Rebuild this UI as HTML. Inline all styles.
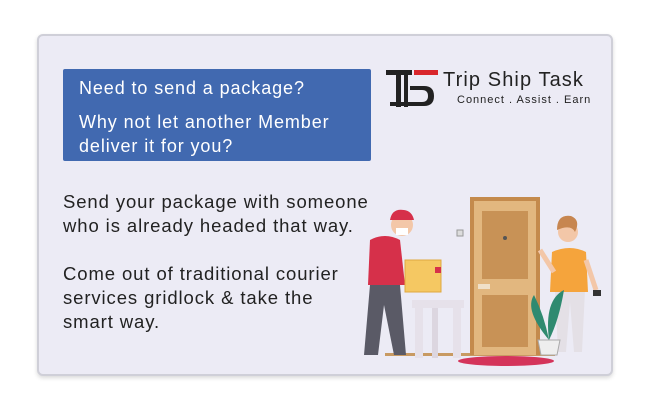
<!DOCTYPE html>
<html><head><style>
body{margin:0;width:649px;height:415px;background:#fff;font-family:"Liberation Sans",sans-serif;position:relative;overflow:hidden}
.card{position:absolute;left:37px;top:34px;width:572px;height:338px;background:#ecebf5;border:2px solid #cfcfd8;border-radius:6px;box-shadow:0 2px 4px rgba(0,0,0,.15)}
.blue{position:absolute;left:63px;top:69px;width:308px;height:92px;background:#4169b0;border-radius:2px;color:#fff;font-size:18px;letter-spacing:0.9px}
.blue div{position:absolute;left:16px;white-space:nowrap}
.t{position:absolute;left:63px;color:#222;font-size:18.5px;letter-spacing:0.9px;line-height:24px;white-space:nowrap}
</style></head><body>
<div class="card"></div>
<div class="blue">
<div style="top:9px">Need to send a package?</div>
<div style="top:41px;line-height:24px">Why not let another Member<br>deliver it for you?</div>
</div>
<div class="t" style="top:190px">Send your package with someone<br>who is already headed that way.</div>
<div class="t" style="top:262px">Come out of traditional courier<br>services gridlock &amp; take the<br>smart way.</div>
<svg style="position:absolute;left:384px;top:68px" width="60" height="44">
<rect x="2" y="2" width="26" height="5" fill="#222"/><rect x="30" y="2" width="24" height="5" fill="#d9262c"/>
<rect x="12" y="7" width="5" height="32" fill="#222"/><rect x="20" y="7" width="4" height="32" fill="#222"/>
<path d="M8 14h10M26 18h14q10 0 10 10t-10 10H6v-4h32q6 0 6-6t-6-6H26z" fill="#222"/>
</svg>
<div style="position:absolute;left:443px;top:69px;font-size:20px;letter-spacing:1.1px;color:#222;white-space:nowrap">Trip Ship Task</div>
<div style="position:absolute;left:457px;top:94px;font-size:11px;letter-spacing:1px;color:#222;white-space:nowrap">Connect . Assist . Earn</div>
<svg style="position:absolute;left:350px;top:190px" width="270" height="180">
<rect x="35" y="163" width="170" height="3" fill="#c89a62"/>
<rect x="120" y="7" width="70" height="158" fill="#c48a4c"/>
<rect x="124" y="11" width="62" height="154" fill="#e2b77f"/>
<rect x="132" y="21" width="46" height="68" fill="#c89256"/>
<rect x="132" y="105" width="46" height="52" fill="#c89256"/>
<circle cx="155" cy="48" r="2" fill="#555"/>
<rect x="128" y="94" width="12" height="5" fill="#f0e0c8"/>
<rect x="107" y="40" width="6" height="6" fill="#ddd" stroke="#999"/>
<ellipse cx="156" cy="171" rx="48" ry="5" fill="#d4345a"/>
<rect x="62" y="110" width="52" height="8" fill="#e6e1ea"/>
<rect x="65" y="118" width="8" height="50" fill="#e6e1ea"/><rect x="103" y="118" width="8" height="50" fill="#e6e1ea"/><rect x="82" y="118" width="6" height="50" fill="#dcd6e0"/>
<path d="M20 95h30l6 70h-12l-10-50-6 50H14z" fill="#5a5a66"/>
<path d="M20 50q15-8 30 0l5 45H18z" fill="#d6304a"/>
<circle cx="52" cy="35" r="11" fill="#f3c7a8"/>
<path d="M40 30q2-12 14-10q8 1 10 10z" fill="#d6304a"/>
<rect x="46" y="38" width="12" height="7" fill="#fff"/>
<rect x="55" y="70" width="36" height="32" fill="#f5c862" stroke="#e0a840"/>
<rect x="85" y="77" width="6" height="6" fill="#d6304a"/>
<path d="M205 100h30l-3 62h-8l-4-50-4 50h-8z" fill="#e4e0e6"/>
<path d="M202 62q18-8 34 0l2 40h-38z" fill="#f5a43c"/>
<circle cx="218" cy="42" r="10" fill="#f3c7a8"/>
<path d="M207 40q0-16 14-14q10 4 4 16q-4-8-18-2z" fill="#c78650"/>
<path d="M190 60l14 22" stroke="#f3c7a8" stroke-width="5"/>
<path d="M236 70l10 30" stroke="#f3c7a8" stroke-width="5"/>
<rect x="243" y="100" width="8" height="6" fill="#333"/>
<path d="M188 150h22l-3 15h-16z" fill="#eee" stroke="#aaa"/>
<path d="M199 150q-25-30-15-45q10 20 15 45q-5-40 15-50q-5 30-15 50" fill="#2f8a70"/>
</svg>
</body></html>
